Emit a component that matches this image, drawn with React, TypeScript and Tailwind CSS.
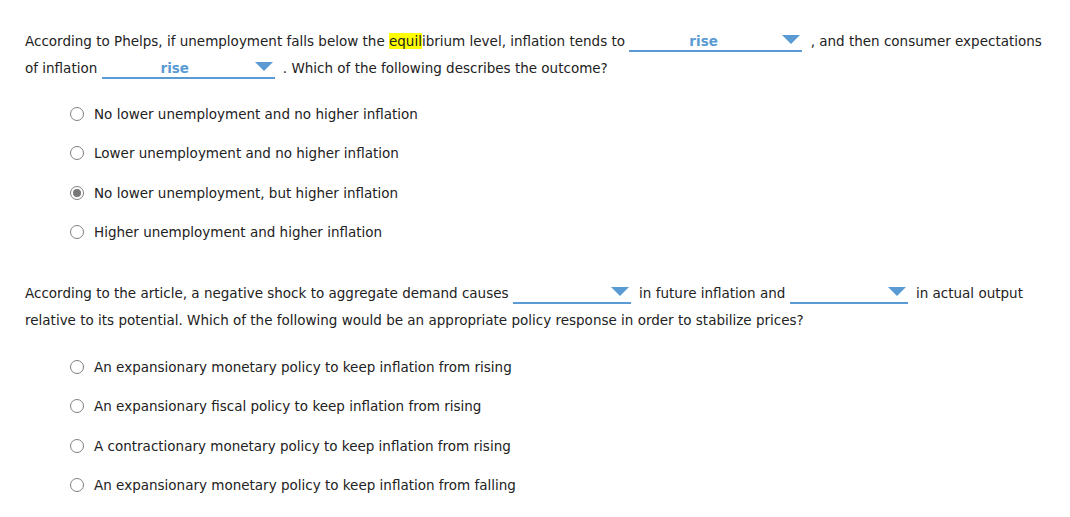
import React from "react";

function Dropdown({ width, value, valueOffset }: { width: string; value?: string; valueOffset?: string }) {
  return (
    <span className={`relative inline-block align-[-6px] h-[22px] mr-[4px] border-b-2 border-[#5a9bd4] ${width}`}>
      {value ? (
        <span className={`absolute top-[-2px] ${valueOffset} font-bold text-[#5a9bd4]`}>{value}</span>
      ) : null}
      <svg className="absolute right-[2px] top-[5px]" width="18" height="9" viewBox="0 0 18 9">
        <polygon points="0,0 18,0 9,9" fill="#5a9bd4" />
      </svg>
    </span>
  );
}

function Radio({ label, checked }: { label: string; checked?: boolean }) {
  return (
    <div className="flex items-center h-[39.5px]">
      <span className="w-[14px] h-[14px] rounded-full border border-[#808080] bg-white flex items-center justify-center mr-[10px]">
        {checked ? <span className="w-[8px] h-[8px] rounded-full bg-[#777]" /> : null}
      </span>
      <span>{label}</span>
    </div>
  );
}

export default function App() {
  return (
    <div className="w-[1070px] h-[517px] bg-white text-[#222] text-[13.5px] pl-[25px] pt-[28px]" style={{ fontFamily: "Verdana, 'DejaVu Sans', sans-serif" }}>
      <div className="leading-[27px]">
        According to Phelps, if unemployment falls below the <span className="bg-[#ffff00]">equil</span>ibrium level, inflation tends to{" "}
        <Dropdown width="w-[173px]" value="rise" valueOffset="left-[60px]" /> , and then consumer expectations
        <br />
        of inflation <Dropdown width="w-[173px]" value="rise" valueOffset="left-[59px]" /> . Which of the following describes the outcome?
      </div>
      <div className="pl-[45px] mt-[12px]">
        <Radio label="No lower unemployment and no higher inflation" />
        <Radio label="Lower unemployment and no higher inflation" />
        <Radio label="No lower unemployment, but higher inflation" checked />
        <Radio label="Higher unemployment and higher inflation" />
      </div>
      <div className="leading-[27px] mt-[28px]">
        According to the article, a negative shock to aggregate demand causes <Dropdown width="w-[118px]" /> in future inflation and{" "}
        <Dropdown width="w-[118px]" /> in actual output
        <br />
        relative to its potential. Which of the following would be an appropriate policy response in order to stabilize prices?
      </div>
      <div className="pl-[45px] mt-[13px]">
        <Radio label="An expansionary monetary policy to keep inflation from rising" />
        <Radio label="An expansionary fiscal policy to keep inflation from rising" />
        <Radio label="A contractionary monetary policy to keep inflation from rising" />
        <Radio label="An expansionary monetary policy to keep inflation from falling" />
      </div>
    </div>
  );
}
